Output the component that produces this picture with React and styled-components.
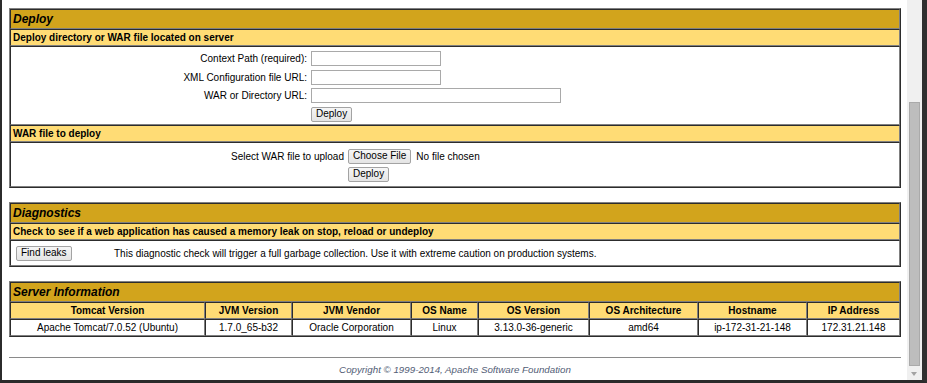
import React from 'react'
import styled, { createGlobalStyle } from 'styled-components'

const GlobalStyle = createGlobalStyle`
html, body {
    margin: 0;
    padding: 0;
    overflow: hidden;
    background: #2d2d2d;
}
`

const Frame = styled.div`
display: flex;
width: 927px;
height: 383px;
box-sizing: border-box;
border-left: 2px solid #2b2b2b;
border-right: 5px solid #303030;
border-bottom: 3px solid #2b2b2b;
font-family: 'Liberation Sans', Arial, sans-serif;
color: #000;
`

const Page = styled.div`
flex: 1;
min-width: 0;
background: #fff;
padding: 8px 6px 0 7px;
display: flex;
flex-direction: column;
overflow: hidden;
`

const Panel = styled.div`
border: 1px outset gray;
margin-bottom: ${props => props.gap}px;
`

const Cell = styled.div`
border: 1px inset gray;
box-sizing: border-box;
padding: 2px;
`

const Title = styled(Cell)`
background: #d2a41c;
font-size: 12px;
line-height: 14px;
font-weight: bold;
font-style: italic;
grid-column: 1 / -1;
`

const Header = styled(Cell)`
background: #ffdc75;
font-size: 10px;
line-height: 11px;
font-weight: bold;
text-align: ${props => props.align || 'left'};
`

const Body = styled(Cell)`
padding: ${props => props.pad};
`

const FormGrid = styled.div`
display: grid;
grid-template-columns: ${props => props.label}px max-content;
column-gap: 4px;
row-gap: ${props => props.rowgap}px;
align-items: center;
`

const Label = styled.span`
font-size: 10px;
text-align: right;
`

const Text = styled.span`
font-size: 10px;
`

const Input = styled.input`
width: ${props => props.width}px;
height: 15px;
box-sizing: border-box;
margin: 0;
padding: 0 2px;
border: 1px solid #a9a9a9;
background: #fff;
`

const Button = styled.button`
justify-self: start;
height: 15px;
margin: 0;
padding: 0 4px;
box-sizing: border-box;
font-family: 'Liberation Sans', Arial, sans-serif;
font-size: 10px;
line-height: 12px;
color: #000;
background: linear-gradient(#f6f6f6, #e4e4e4);
border: 1px solid #a3a3a3;
border-radius: 2px;
`

const FilePick = styled.div`
display: flex;
align-items: center;
gap: 5px;
`

const DiagRow = styled.div`
display: grid;
grid-template-columns: 98px 1fr;
align-items: center;
`

const InfoGrid = styled.div`
display: grid;
grid-template-columns: 195px 87px 119px 67px 111px 109px 109px 93px;
`

const DataCell = styled(Cell)`
font-size: 10px;
line-height: 11px;
text-align: center;
white-space: nowrap;
`

const Rule = styled.hr`
margin: 0 0 6px;
height: 0;
border: none;
border-top: 1px solid #8a8a8a;
`

const Footer = styled.div`
text-align: center;
font-size: 9.75px;
font-style: italic;
color: #525d76;
`

const Scrollbar = styled.div`
width: 15px;
flex: none;
background: #f0f0f0;
position: relative;
`

const Thumb = styled.div`
position: absolute;
left: 2px;
right: 2px;
top: 102px;
height: 264px;
box-sizing: border-box;
background: #bdbdbd;
border: 1px solid #aaaaaa;
`

const Arrow = styled.div`
position: absolute;
bottom: 4px;
left: 4px;
width: 0;
height: 0;
border-left: 3.5px solid transparent;
border-right: 3.5px solid transparent;
border-top: 4px solid #a3a3a3;
`

const info = [
    ['Tomcat Version', 'Apache Tomcat/7.0.52 (Ubuntu)'],
    ['JVM Version', '1.7.0_65-b32'],
    ['JVM Vendor', 'Oracle Corporation'],
    ['OS Name', 'Linux'],
    ['OS Version', '3.13.0-36-generic'],
    ['OS Architecture', 'amd64'],
    ['Hostname', 'ip-172-31-21-148'],
    ['IP Address', '172.31.21.148'],
]

export default () => {
    return (
        <Frame>
            <GlobalStyle />
            <Page>
                <Panel gap={14}>
                    <Title>Deploy</Title>
                    <Header>Deploy directory or WAR file located on server</Header>
                    <Body pad="4px 2px 2px">
                        <FormGrid label={294} rowgap={3.5}>
                            <Label>Context Path (required):</Label>
                            <Input width={130} />
                            <Label>XML Configuration file URL:</Label>
                            <Input width={130} />
                            <Label>WAR or Directory URL:</Label>
                            <Input width={250} />
                            <span />
                            <Button>Deploy</Button>
                        </FormGrid>
                    </Body>
                    <Header>WAR file to deploy</Header>
                    <Body pad="6px 2px 4px">
                        <FormGrid label={331} rowgap={3}>
                            <Label>Select WAR file to upload</Label>
                            <FilePick>
                                <Button>Choose File</Button>
                                <Text>No file chosen</Text>
                            </FilePick>
                            <span />
                            <Button>Deploy</Button>
                        </FormGrid>
                    </Body>
                </Panel>

                <Panel gap={14}>
                    <Title>Diagnostics</Title>
                    <Header>Check to see if a web application has caused a memory leak on stop, reload or undeploy</Header>
                    <Body pad="5px 2px 4px 5px">
                        <DiagRow>
                            <Button>Find leaks</Button>
                            <Text>This diagnostic check will trigger a full garbage collection. Use it with extreme caution on production systems.</Text>
                        </DiagRow>
                    </Body>
                </Panel>

                <Panel gap={20}>
                    <InfoGrid>
                        <Title>Server Information</Title>
                        {info.map(([name]) => (
                            <Header key={name} align="center">{name}</Header>
                        ))}
                        {info.map(([name, value]) => (
                            <DataCell key={name}>{value}</DataCell>
                        ))}
                    </InfoGrid>
                </Panel>

                <Rule />
                <Footer>Copyright &copy; 1999-2014, Apache Software Foundation</Footer>
            </Page>
            <Scrollbar>
                <Thumb />
                <Arrow />
            </Scrollbar>
        </Frame>
    )
}
